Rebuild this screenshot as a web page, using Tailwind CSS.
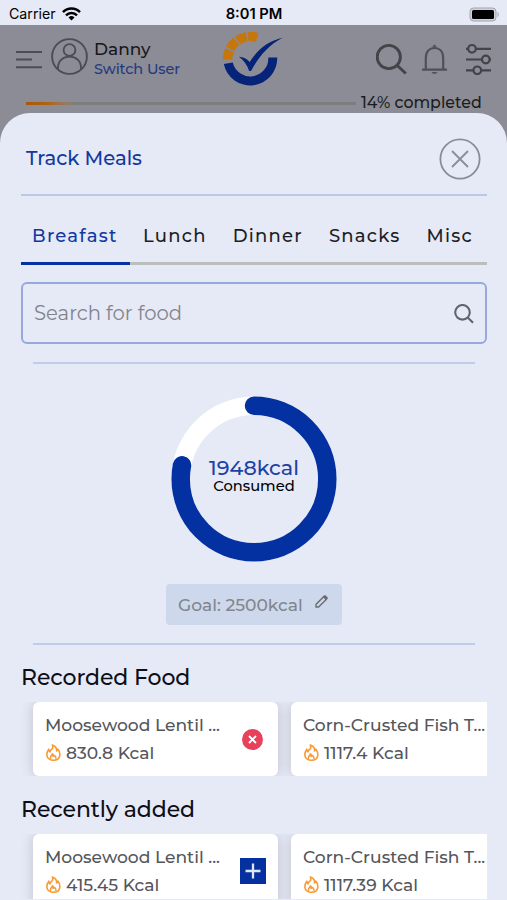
<!DOCTYPE html>
<html lang="en">
<head>
  <meta charset="UTF-8" />
  <meta name="viewport" content="width=device-width, initial-scale=1" />
  <title>Track Meals</title>
  <script src="https://cdn.jsdelivr.net/npm/@tailwindcss/browser@4"></script>
</head>
<body class="bg-[#8b8c95]">
  <div class="w-[507px] h-[900px] flex flex-col overflow-hidden font-['Montserrat','Inter',sans-serif] whitespace-nowrap">

    <!-- Status bar -->
    <div class="h-[25px] shrink-0 bg-[#e6e9f6] grid grid-cols-3 items-center pl-2 pr-[7px] pt-[3px] font-['Inter',sans-serif] text-black">
      <div class="flex items-center gap-1.5 pl-px text-[14.2px]">
        <span>Carrier</span>
        <svg class="w-[19px] h-[14px]" viewBox="0 0 19 14" fill="none" stroke="#000" stroke-width="2.5">
          <path d="M1 5.1a12 12 0 0 1 17 0M4 8.3a7.8 7.8 0 0 1 11 0" />
          <path d="M9.5 13.6 6.5 10.5a4.3 4.3 0 0 1 6 0z" fill="#000" stroke="none" />
        </svg>
      </div>
      <span class="text-center text-[14.7px] font-semibold">8:01 PM</span>
      <svg class="w-[31px] h-[15px] justify-self-end" viewBox="0 0 31 15">
        <rect x="1" y="1" width="26" height="13" rx="3.5" fill="#cfd1dc" stroke="#a3a5ad" />
        <rect x="3" y="3" width="22" height="9" rx="1.5" fill="#000" />
        <path d="M28.5 5c1.6.6 1.6 4.4 0 5z" fill="#a3a5ad" />
      </svg>
    </div>

    <!-- Header, dimmed behind the sheet -->
    <header class="h-[88px] shrink-0 flex flex-col">
      <div class="h-[68px] flex items-center pl-4 pr-[15px]">
        <svg class="w-[26px] h-5 mt-px" viewBox="0 0 26 20" stroke="#4c4c51" stroke-width="2">
          <path d="M0 2h26M0 9.500h16M0 17.200h26" />
        </svg>
        <svg class="w-[37px] h-[37px] ml-[9px] -mt-[5px]" viewBox="0 0 37 37" fill="none" stroke="#4c4c51" stroke-width="1.900">
          <circle cx="18.500" cy="18.500" r="17.400" />
          <circle cx="18.500" cy="12" r="5.900" />
          <path d="M7 31.200v-1.400C7 23 12 18.600 18.500 18.600S30 23 30 29.800v1.400" />
        </svg>
        <div class="ml-1.5 w-[128px] flex flex-col">
          <span class="text-[17px] leading-5 font-medium text-[#18181b]">Danny</span>
          <span class="text-[14.5px] leading-5 font-medium tracking-[-0.1px] text-[#26397f]">Switch User</span>
        </div>
        <svg class="w-[64px] h-[60px] -mt-1" viewBox="0 0 64 60">
          <path d="M5.500 32.500A23 23 0 0 1 35.200 10.500" fill="none" stroke="#c5760c" stroke-width="9.500" stroke-dasharray="9.700 1.500" />
          <path d="M1.800 37 10.800 35.500A18 18 0 0 0 46.300 30.500H55.200A27 27 0 0 1 1.800 37z" fill="#06237a" />
          <path d="M17 29.800c4.500.4 7.800 1.800 10.700 5.200C36 22 46 14 60.500 10.700 46 18.500 36.500 30 29 44h-1.800C25.500 38.500 22 33.500 17 29.800z" fill="#06237a" />
        </svg>
        <div class="ml-auto flex items-center">
          <svg class="w-8 h-8" viewBox="0 0 32 32" fill="none" stroke="#434348" stroke-width="2.900">
            <circle cx="12.800" cy="14" r="11.600" />
            <path d="m21.300 22.500 8.500 8" />
          </svg>
          <svg class="w-[26px] h-8 ml-[14px]" viewBox="0 0 26 32" fill="none" stroke="#505055" stroke-width="2.200">
            <path d="M0 26.700h25M3.800 26.500v-11.500C3.800 8.500 7.500 5 12.500 5s8.700 3.500 8.700 10v11.500" />
            <path d="M9.500 29c1 2.600 5 2.600 6 0z" fill="#55555a" stroke="none" />
            <path d="M10.500 4.700c0-4 4-4 4 0z" fill="#55555a" stroke="none" />
          </svg>
          <svg class="w-[26px] h-8 ml-[18px]" viewBox="0 0 26 32" fill="none" stroke="#434348" stroke-width="2.200">
            <path d="M0 5.800h2.500M10 5.800h15M0 16.500h15.500M24 16.500h1M0 27.300h7.500M15 27.300h10" />
            <circle cx="6" cy="5.800" r="3.800" />
            <circle cx="19.800" cy="16.500" r="3.800" />
            <circle cx="11.300" cy="27.300" r="3.800" />
          </svg>
        </div>
      </div>
      <div class="h-5 flex items-center pl-[26px] gap-[5px]">
        <div class="w-[330px] h-[3px] bg-[#7d7d7b]">
          <div class="h-full bg-linear-to-r from-[#a9570a] via-[#b1650f] to-[#8a7f70]" style="width: 14%"></div>
        </div>
        <span class="text-[15.8px] leading-5 font-medium text-[#1c1c20]">14% completed</span>
      </div>
    </header>

    <!-- Sheet -->
    <main class="flex-1 min-h-0 bg-[#e6e9f6] rounded-t-[30px] pl-[21px] pr-5 flex flex-col">
      <div class="h-[83px] shrink-0 border-b-2 border-[#b9c8e7] flex items-center justify-between pt-2.5 pl-[5px] pr-1.5">
        <h1 class="text-[19.6px] font-medium text-[#1239a0]">Track Meals</h1>
        <svg class="w-[42px] h-[42px]" viewBox="0 0 42 42" fill="none" stroke="#8a8c96" stroke-width="1.800">
          <circle cx="21" cy="21" r="19.600" />
          <path d="m13 13 16 16M29 13 13 29" />
        </svg>
      </div>

      <nav class="h-[69px] shrink-0 flex text-[18px] font-medium tracking-[1.25px] text-[#1d1e25]">
        <span class="w-[109px] pl-[11px] pt-[27px] border-b-3 border-[#0631a2] text-[#1239a0]">Breafast</span>
        <div class="flex-1 pt-[27px] pl-[13px] pr-[14px] flex justify-between border-b-3 border-[#bcbdbd]">
          <span>Lunch</span>
          <span>Dinner</span>
          <span>Snacks</span>
          <span>Misc</span>
        </div>
      </nav>

      <div class="mt-[17px] h-[62px] shrink-0 rounded-md border-2 border-[#96a8dc] flex items-center justify-between pl-[11px] pr-[11px] pt-px">
        <span class="text-[19.6px] text-[#82848c]">Search for food</span>
        <svg class="w-5 h-5" viewBox="0 0 20 20" fill="none" stroke="#62646c" stroke-width="2.100">
          <circle cx="8.500" cy="8.300" r="7.300" />
          <path d="m13.700 13.500 5.300 5.300" />
        </svg>
      </div>

      <section class="mt-[18px] mx-3 h-[283px] shrink-0 border-y-2 border-[#bfcde9] flex flex-col items-center">
        <div class="mt-[32px] grid place-items-center">
          <svg class="w-[166px] h-[166px] col-start-1 row-start-1 -rotate-90" viewBox="0 0 166 166" fill="none" stroke-width="18.500">
            <circle cx="83" cy="83" r="73.300" stroke="#fff" />
            <circle cx="83" cy="83" r="73.300" stroke="#0331a1" stroke-linecap="round" pathLength="100" stroke-dasharray="78 100" />
          </svg>
          <div class="col-start-1 row-start-1 flex flex-col items-center -mt-1.5">
            <span class="text-[20.7px] leading-[19px] font-medium text-[#1d42a5]">1948kcal</span>
            <span class="text-[14.7px] leading-[18px] font-medium text-black">Consumed</span>
          </div>
        </div>
        <div class="mt-[22px] w-[176px] h-[41px] rounded-[4px] bg-[#cdd8ec] flex items-center pl-3 gap-3">
          <span class="text-[17.1px] font-medium text-[#83868d]">Goal: 2500kcal</span>
          <svg class="w-[13px] h-[13px] -mt-1.5" viewBox="0 0 13 13" fill="none" stroke="#6c6e73" stroke-width="1.400">
            <path d="M1 12v-2.600l7.600-7.600 2.600 2.600L3.600 12z" />
            <path d="M8.800 1.600 10 .8 12.200 3l-.8 1.200z" fill="#6c6e73" />
          </svg>
        </div>
      </section>

      <h2 class="mt-[17px] h-[32px] shrink-0 leading-[32px] text-[22px] font-medium tracking-[-0.1px] text-[#0d0f18]">Recorded Food</h2>
      <div id="recorded" class="mt-[8px] h-[74px] shrink-0 pl-3 flex gap-[13px] overflow-hidden"></div>

      <h2 class="mt-[18px] h-[32px] shrink-0 leading-[32px] text-[22px] font-medium tracking-[-0.1px] text-[#0d0f18]">Recently added</h2>
      <div id="recent" class="mt-[8px] h-[65px] shrink-0 pl-3 flex gap-[13px] overflow-hidden"></div>
    </main>
  </div>

<script>
  const removeIcon = `<svg class="w-[21px] h-[21px]" viewBox="0 0 21 21"><circle cx="10.500" cy="10.500" r="10.500" fill="#e8415b" /><path d="m7 7 7 7M14 7l-7 7" stroke="#fff" stroke-width="1.800" /></svg>`;
  const addIcon = `<svg class="w-[26px] h-[26px] -mr-[3px]" viewBox="0 0 26 26"><path d="M0 0h26v26H0z" fill="#0530a0" /><path d="M13 5.500v15M5.500 13h15" stroke="#dfe6f7" stroke-width="2.300" /></svg>`;
  const flame = `<svg class="w-[15px] h-[17px] -mt-px" viewBox="0 0 15 17" fill="none" stroke="#f99a35" stroke-width="1.600" stroke-linejoin="round"><path d="M5.500 5.500C7 4.200 7.200 2.800 6.300 1c3 1 4.600 3.300 4.200 6 .8-.3 1.200-1 1.300-2 1.600 2 2.300 4.200 2 6.300-.4 2.900-2.800 4.900-6.300 4.900S1.200 14.200.9 11.300C.7 9.300 1.300 7.300 2.800 5.200c.1 1.300.5 2 1.200 2.700.1-1 .6-1.800 1.500-2.400z" /><path d="M4.500 15c-.7-2 .4-3.200 2.100-5.200.8 1 .8 1.700.5 2.600l1.600-.9c1.300 1.200 1.700 2.300 1.100 3.500" /></svg>`;

  const recorded = [
    { name: 'Moosewood Lentil ...', kcal: '830.8' },
    { name: 'Corn-Crusted Fish T...', kcal: '1117.4' },
  ];
  const recent = [
    { name: 'Moosewood Lentil ...', kcal: '415.45' },
    { name: 'Corn-Crusted Fish T...', kcal: '1117.39' },
  ];

  function renderCards(id, items, icon) {
    document.getElementById(id).innerHTML = items.map(item => `
      <div class="w-[245px] h-[74px] shrink-0 rounded-md bg-white shadow-[0_0_14px_rgba(0,0,0,0.16)] flex items-center justify-between pl-3 pr-[15px] text-[17.1px] leading-7 font-medium text-[#55565b]">
        <div class="w-[190px] shrink-0">
          <p>${item.name}</p>
          <p class="flex items-center gap-[5px] pl-px">${flame}<span>${item.kcal} Kcal</span></p>
        </div>
        ${icon}
      </div>
    `).join('');
  }

  renderCards('recorded', recorded, removeIcon);
  renderCards('recent', recent, addIcon);
</script>
</body>
</html>
